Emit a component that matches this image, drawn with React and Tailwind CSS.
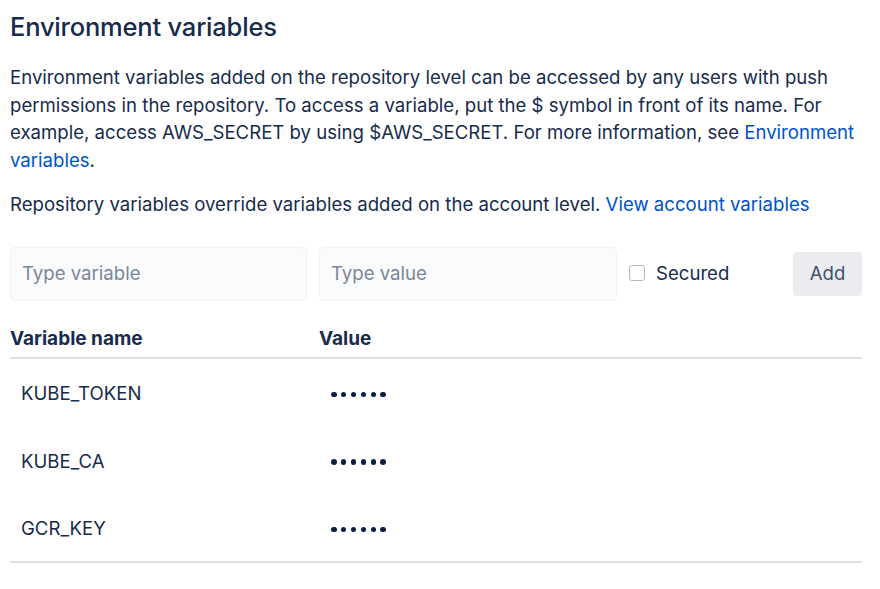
import React from "react";

const rows = ["KUBE_TOKEN", "KUBE_CA", "GCR_KEY"];

function Dots() {
  return (
    <div className="flex items-center gap-[4.4px]">
      {[0, 1, 2, 3, 4, 5].map((i) => (
        <span key={i} className="block w-[5.5px] h-[5.5px] rounded-full bg-[#091e42]" />
      ))}
    </div>
  );
}

export default function App() {
  return (
    <div
      className="w-[880px] h-[589px] bg-white pl-[10px] pr-[18px] text-[#172b4d] overflow-hidden"
      style={{ fontFamily: "Inter, 'Noto Sans', sans-serif" }}
    >
      <h1 className="pt-[11px] text-[25.5px] leading-[32px] font-medium tracking-[-0.2px]">
        Environment variables
      </h1>
      <p className="mt-[21px] text-[18.6px] leading-[27.5px]">
        Environment variables added on the repository level can be accessed by any users with push
        permissions in the repository. To access a variable, put the $ symbol in front of its name. For
        example, access AWS_SECRET by using $AWS_SECRET. For more information, see{" "}
        <a className="text-[#0052cc]">Environment variables</a>.
      </p>
      <p className="mt-[17px] text-[18.6px] leading-[27.5px]">
        Repository variables override variables added on the account level.{" "}
        <a className="text-[#0052cc]">View account variables</a>
      </p>

      <div className="mt-[28px] flex items-center h-[54px]">
        <div className="w-[297px] h-[54px] rounded-[5px] border border-[#f1f2f4] bg-[#fafbfc] flex items-center pl-[11px] text-[18.6px] text-[#7a869a]">
          Type variable
        </div>
        <div className="ml-[12px] w-[298px] h-[54px] rounded-[5px] border border-[#f1f2f4] bg-[#fafbfc] flex items-center pl-[11px] text-[18.6px] text-[#7a869a]">
          Type value
        </div>
        <div className="ml-[12px] flex items-center">
          <span className="block w-[16px] h-[16px] rounded-[3px] border border-[#b3b9c4] bg-white" />
          <span className="ml-[11px] text-[18.6px]">Secured</span>
        </div>
        <div className="ml-auto w-[69px] h-[44px] rounded-[4px] bg-[#ebecf0] flex items-center justify-center text-[18.6px] text-[#42526e]">
          Add
        </div>
      </div>

      <div className="flex h-[58px] pt-[24px] border-b-2 border-[#dfe1e6] text-[19px] leading-[27.5px] font-bold">
        <div className="w-[309px]">Variable name</div>
        <div>Value</div>
      </div>
      <div className="border-b-2 border-[#dfe1e6]">
        {rows.map((r) => (
          <div key={r} className="flex items-center h-[67.5px] pt-[4px] text-[18.6px]">
            <div className="w-[309px] pl-[11px]">{r}</div>
            <div className="pl-[12px]">
              <Dots />
            </div>
          </div>
        ))}
      </div>
    </div>
  );
}
